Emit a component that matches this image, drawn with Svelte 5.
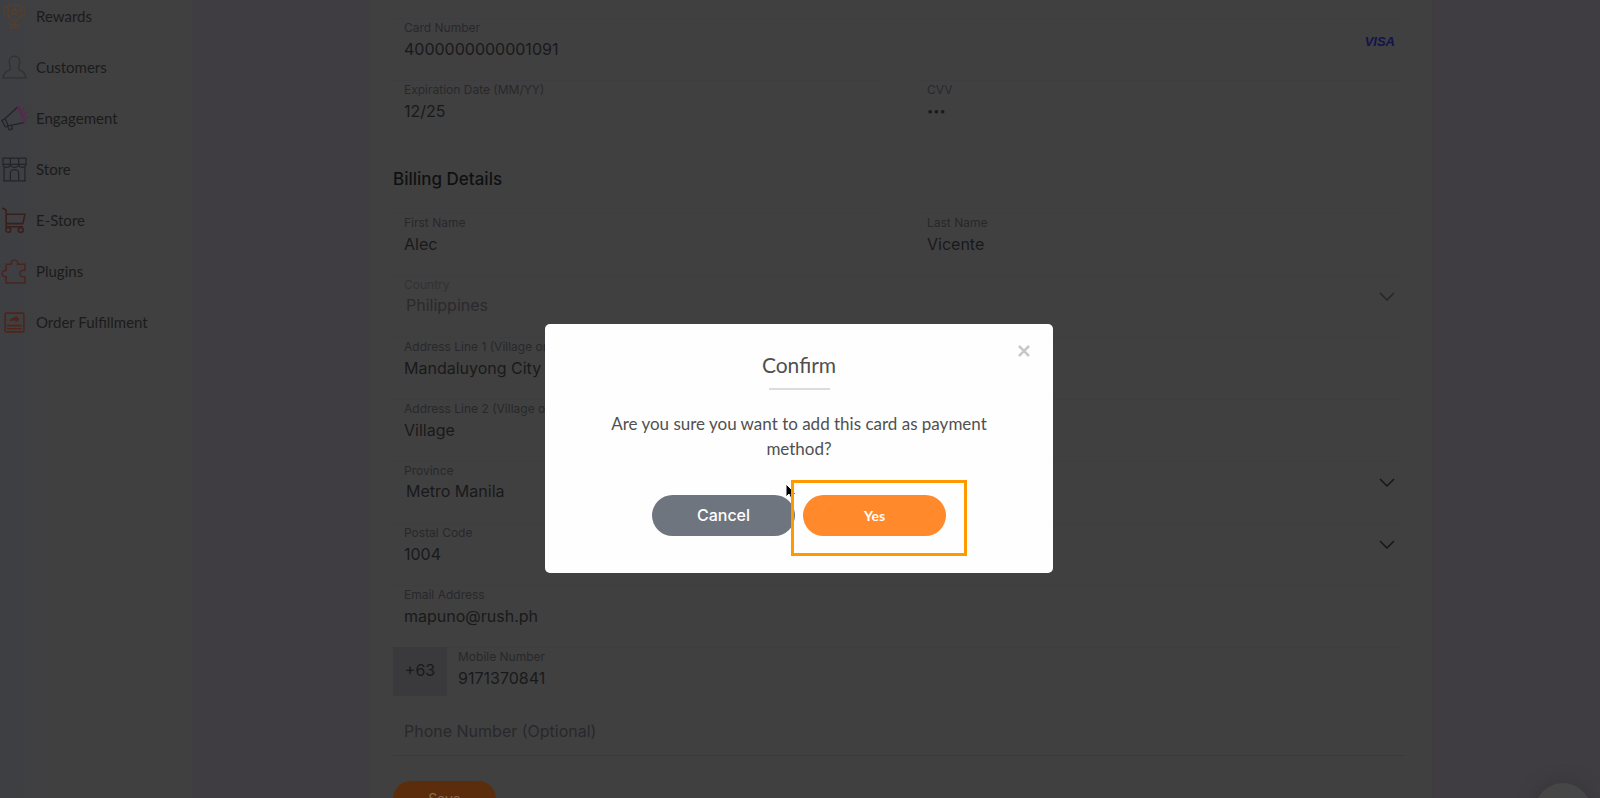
<script lang="ts">
  interface Field {
    id: string;
    label: string;
    value: string;
    type?: 'text' | 'password' | 'select';
    faded?: boolean;
    brand?: string;
  }

  const navItems = [
    { icon: 'rewards', label: 'Rewards' },
    { icon: 'customers', label: 'Customers' },
    { icon: 'engagement', label: 'Engagement' },
    { icon: 'store', label: 'Store' },
    { icon: 'estore', label: 'E-Store' },
    { icon: 'plugins', label: 'Plugins' },
    { icon: 'orders', label: 'Order Fulfillment' },
  ];

  const cardRows: Field[][] = [
    [{ id: 'card', label: 'Card Number', value: '4000000000001091', brand: 'VISA' }],
    [
      { id: 'expiry', label: 'Expiration Date (MM/YY)', value: '12/25' },
      { id: 'cvv', label: 'CVV', value: '123', type: 'password' },
    ],
  ];

  const billingRows: Field[][] = [
    [
      { id: 'first', label: 'First Name', value: 'Alec' },
      { id: 'last', label: 'Last Name', value: 'Vicente' },
    ],
    [{ id: 'country', label: 'Country', value: 'Philippines', type: 'select', faded: true }],
    [{ id: 'address1', label: 'Address Line 1 (Village or Subdivision)', value: 'Mandaluyong City' }],
    [{ id: 'address2', label: 'Address Line 2 (Village or Subdivision)', value: 'Village' }],
    [{ id: 'province', label: 'Province', value: 'Metro Manila', type: 'select' }],
    [
      { id: 'postal', label: 'Postal Code', value: '1004' },
      { id: 'city', label: '', value: '', type: 'select' },
    ],
    [{ id: 'email', label: 'Email Address', value: 'mapuno@rush.ph' }],
  ];

  let showConfirm = $state(true);

  function closeConfirm() {
    showConfirm = false;
  }
</script>

{#snippet navIcon(name: string)}
  <svg class="nav-icon {name}" viewBox="0 0 24 24" aria-hidden="true">
    {#if name === 'rewards'}
      <path d="M6 1h12v9a6 6 0 0 1-12 0zM6 3H2v5a4 4 0 0 0 4 4M18 3h4v5a4 4 0 0 1-4 4M12 16v4M8 20h8v3H8z" />
      <path d="M12 4l1 2.300 2.500.2-1.900 1.600.6 2.400-2.200-1.300-2.200 1.300.6-2.400-1.900-1.600 2.500-.2z" />
    {:else if name === 'customers'}
      <path d="M12 1c-3 0-5 2.400-5 5.500S8.500 12 8 13.500C7.500 15 5 15 3.500 16.500 2 18 1 20 1 22h22c0-2-1-4-2.500-5.500C19 15 16.500 15 16 13.500S17 9.600 17 6.500 15 1 12 1z" />
    {:else if name === 'engagement'}
      <path d="M0 14l3 6 3-1-3-7zM3 12L15 1M6 19l15-3M5 19l2 4 3-1-1-3.500" />
      <path class="pink" d="M15 1l6.500 15 1.500-1L16.500 0zM20 4l1.500-2.500M21.500 7.500l3-1.500M23 11h2.500" />
    {:else if name === 'store'}
      <path d="M1 1h22v6H1zM8 1v6M16 1v6M1 7a3.500 3 0 0 0 7 0 4 3 0 0 0 8 0 3.500 3 0 0 0 7 0M2 10v13h20V10M8 23v-8a4 3 0 0 1 8 0v8M1 23h22" />
    {:else if name === 'estore'}
      <path d="M0 0l4 2v17M4 6h18l-2 9H4M4 18h16" />
      <circle cx="6" cy="21" r="2.300" />
      <circle cx="18" cy="21" r="2.300" />
    {:else if name === 'plugins'}
      <path d="M4 5h5c-.6-2 .6-4 3-4s3.600 2 3 4h7v6c-2.500-.8-5 .5-5 3s2.500 3.800 5 3v6H4v-6c-2 .4-4-.8-4-3s2-3.400 4-3z" />
    {:else}
      <rect x="3" y="3" width="18" height="18" rx="1" />
      <path d="M5 15h14M5 18h14" />
      <path class="solid" d="M7 11c1-3 3-4 6-4V5l4 4-4 3v-2c-2 0-4 0-6 1z" />
    {/if}
  </svg>
{/snippet}

{#snippet fieldBox(field: Field)}
  <div class="field" class:faded={field.faded}>
    <label for={field.id}>{field.label}</label>
    {#if field.type === 'select'}
      <select id={field.id} aria-label={field.label || 'City'}>
        <option>{field.value}</option>
      </select>
      <svg class="chevron" viewBox="0 0 16 9" aria-hidden="true"><path d="M1 1l7 7 7-7" /></svg>
    {:else}
      <input id={field.id} type={field.type ?? 'text'} value={field.value} />
    {/if}
    {#if field.brand}
      <span class="brand">{field.brand}</span>
    {/if}
  </div>
{/snippet}

<div class="page">
  <nav class="sidebar">
    {#each navItems as item}
      <a class="nav-item" href="#{item.icon}">
        {@render navIcon(item.icon)}
        {item.label}
      </a>
    {/each}
  </nav>

  <main class="content">
    <form class="form">
      {#each cardRows as row}
        <div class="row">
          {#each row as field}
            {@render fieldBox(field)}
          {/each}
        </div>
      {/each}

      <h2>Billing Details</h2>

      {#each billingRows as row}
        <div class="row">
          {#each row as field}
            {@render fieldBox(field)}
          {/each}
        </div>
      {/each}

      <div class="phone-row">
        <span class="prefix">+63</span>
        <div class="field">
          <label for="mobile">Mobile Number</label>
          <input id="mobile" type="text" value="9171370841" />
        </div>
      </div>

      <input class="optional" type="text" placeholder="Phone Number (Optional)" aria-label="Phone Number (Optional)" />

      <button type="button" class="save">Save</button>
    </form>
  </main>

  <div class="chat"></div>
</div>

{#if showConfirm}
  <div class="backdrop">
    <div class="modal" role="dialog" aria-modal="true" aria-labelledby="confirm-title">
      <button class="close" aria-label="Close" onclick={closeConfirm}>
        <svg viewBox="0 0 12 12" aria-hidden="true"><path d="M1 1l10 10M11 1L1 11" /></svg>
      </button>
      <h1 id="confirm-title">Confirm</h1>
      <hr />
      <p>Are you sure you want to add this card as payment method?</p>
      <div class="actions">
        <button class="btn cancel" onclick={closeConfirm}>Cancel</button>
        <div class="yes-wrap">
          <button class="btn yes" onclick={closeConfirm}>Yes</button>
          <svg class="cursor" viewBox="0 0 12 17" aria-hidden="true">
            <path d="M1 1v13l3-3 2 5 2-1-2-4h5z" />
          </svg>
          <span class="highlight"></span>
        </div>
      </div>
    </div>
  </div>
{/if}

<style>
  :global(body) {
    margin: 0;
    background: #3f3d42;
  }

  .page {
    --surface: #404040;
    --ink: #19191b;
    --muted: #28282b;
    display: flex;
    height: 100vh;
    overflow: hidden;
    background: #3f3d42;
    font-family: Inter, 'Liberation Sans', sans-serif;
    color: var(--ink);
    position: relative;
  }

  .sidebar {
    flex: 0 0 192px;
    display: flex;
    flex-direction: column;
    gap: 19px;
    background: linear-gradient(90deg, #3e3f43, var(--surface) 70px);
  }

  .nav-item {
    display: flex;
    align-items: center;
    gap: 9px;
    height: 32px;
    padding-left: 2px;
    font-family: Lato, 'Open Sans', sans-serif;
    font-size: 15px;
    color: #1b1b1c;
    text-decoration: none;
  }

  .nav-icon {
    width: 25px;
    height: 25px;
    fill: none;
    stroke: #23232b;
    stroke-width: 1.2;
    overflow: visible;
  }

  .rewards {
    stroke: #54402f;
  }

  .customers {
    stroke: #322f2e;
  }

  .pink {
    stroke: #5c2452;
  }

  .estore {
    stroke: #391f1c;
    stroke-width: 1.5;
  }

  .plugins {
    stroke: #4a2520;
    stroke-width: 1.5;
  }

  .orders {
    stroke: #522416;
    stroke-width: 1.5;
  }

  .solid {
    fill: #522416;
    stroke: none;
  }

  .content {
    flex: 1;
    margin: 0 166px 0 177px;
    background: var(--surface);
    border-right: 2px solid #3c3c3c;
  }

  .form {
    display: flex;
    flex-direction: column;
    gap: 13px;
    padding: 18px 27px 0 24px;
  }

  .row {
    display: flex;
    gap: 34px;
  }

  .field {
    flex: 1;
    position: relative;
    display: flex;
    flex-direction: column;
    box-sizing: border-box;
    height: 49px;
    padding: 0 11px;
    border-top: 1px solid #3e3e42;
  }

  .field label {
    height: 18px;
    font-size: 12px;
    line-height: 18px;
    color: var(--muted);
  }

  .field input,
  .field select {
    width: 100%;
    height: 24px;
    padding: 0;
    border: 0;
    outline: 0;
    background: transparent;
    color: var(--ink);
    font-family: inherit;
    font-size: 16px;
    line-height: 24px;
    appearance: none;
  }

  .field input[type='password'] {
    font-size: 11px;
  }

  .field select {
    height: 22px;
    padding-left: 2px;
    line-height: 22px;
  }

  .faded label {
    color: #323236;
  }

  .faded select {
    color: #2a2a2d;
  }

  .chevron {
    position: absolute;
    right: 10px;
    top: 16px;
    width: 16px;
    height: 9px;
    fill: none;
    stroke: #161616;
    stroke-width: 1.5;
    pointer-events: none;
  }

  .faded .chevron {
    stroke: #262626;
  }

  .brand {
    position: absolute;
    right: 10px;
    top: 15px;
    font-family: 'Liberation Sans', sans-serif;
    font-size: 13px;
    line-height: 16px;
    font-weight: 700;
    font-style: italic;
    color: #13134e;
  }

  h2 {
    margin: 25px 0 9px;
    font-size: 17px;
    line-height: 24px;
    font-weight: 500;
    color: #101012;
  }

  .phone-row {
    display: flex;
  }

  .prefix {
    width: 54px;
    height: 49px;
    line-height: 47px;
    text-align: center;
    background: #3a393c;
    font-size: 16px;
  }

  .optional {
    height: 44px;
    padding: 0 11px 2px;
    border: 0;
    border-bottom: 1px solid #3a3a3a;
    outline: 0;
    background: transparent;
    font-family: inherit;
    font-size: 16px;
  }

  .optional::placeholder {
    color: var(--muted);
    opacity: 1;
  }

  .save {
    align-self: flex-start;
    width: 103px;
    height: 36px;
    margin-top: 12px;
    border: 0;
    border-radius: 18px;
    background: #5b2d0d;
    color: #8a6a52;
    font-family: inherit;
    font-size: 14px;
    line-height: 32px;
  }

  .chat {
    position: absolute;
    right: 9px;
    bottom: -41px;
    width: 56px;
    height: 56px;
    border-radius: 50%;
    background: #474647;
    box-shadow: 0 0 12px 6px #3c393d;
  }

  .backdrop {
    position: fixed;
    inset: 0;
    display: flex;
    align-items: center;
    justify-content: center;
    padding: 98px 2px 0 0;
  }

  .modal {
    position: relative;
    box-sizing: border-box;
    width: 508px;
    padding: 27px 56px 37px;
    border-radius: 5px;
    background: #fefefe;
    color: #505050;
    font-family: Lato, 'Open Sans', sans-serif;
    text-align: center;
  }

  .close {
    position: absolute;
    top: 20px;
    right: 22px;
    width: 14px;
    height: 14px;
    padding: 1px;
    border: 0;
    background: transparent;
  }

  .close svg {
    display: block;
    stroke: #c8c8c8;
    stroke-width: 2.6;
  }

  h1 {
    margin: 0;
    font-size: 21px;
    line-height: 28px;
    font-weight: 400;
  }

  hr {
    width: 61px;
    height: 2px;
    margin: 9px auto 21px;
    border: 0;
    background: #dcdcdc;
  }

  p {
    margin: 0;
    font-size: 17px;
    line-height: 25px;
  }

  .actions {
    display: flex;
    justify-content: center;
    gap: 8px;
    margin-top: 34px;
  }

  .btn {
    display: block;
    width: 143px;
    height: 41px;
    padding: 0;
    border: 0;
    border-radius: 21px;
    color: #fff;
  }

  .cancel {
    background: #6f757e;
    font-family: Inter, sans-serif;
    font-size: 16px;
    font-weight: 500;
  }

  .yes {
    background: #ff892b;
    font-family: Lato, sans-serif;
    font-size: 14px;
    font-weight: 700;
  }

  .yes-wrap {
    position: relative;
  }

  .highlight {
    position: absolute;
    inset: -15px -21px -20px -12px;
    border: 3px solid #ff9900;
    pointer-events: none;
  }

  .cursor {
    position: absolute;
    left: -18px;
    top: -12px;
    width: 12px;
    height: 17px;
    fill: #000;
    stroke: #fff;
    stroke-width: 1;
  }
</style>
